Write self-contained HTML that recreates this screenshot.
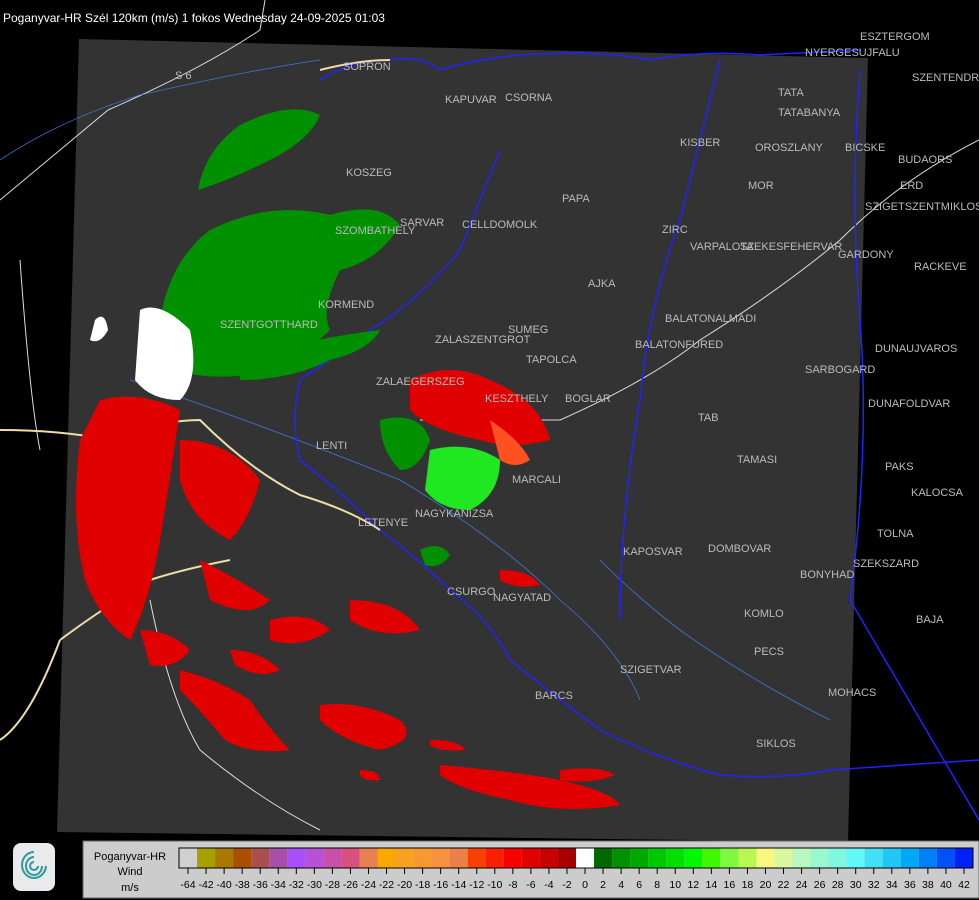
<!DOCTYPE html>
<html><head><meta charset="utf-8"><style>
html,body{margin:0;padding:0;background:#000;width:979px;height:900px;overflow:hidden;font-family:"Liberation Sans",sans-serif}
svg{position:absolute;left:0;top:0}
.t{font-family:"Liberation Sans",sans-serif;font-size:11px;fill:#bbb}
</style></head><body>
<svg width="979" height="900" viewBox="0 0 979 900">
<rect width="979" height="900" fill="#000"/>
<polygon points="79,39 868,58 848,842 57,832" fill="#333"/>
<g fill="none" stroke="#ddd" stroke-width="1">
<path d="M108,110 Q200,70 260,30 L265,0"/>
<path d="M0,200 Q60,150 108,110"/>
<path d="M420,420 Q520,420 560,420 Q650,380 700,340 Q780,290 840,240 Q900,180 979,140"/>
<path d="M150,600 Q170,700 200,750 Q260,800 320,830"/>
<path d="M20,260 Q30,400 40,450"/>
</g>
<g fill="none" stroke="#48f" stroke-width="0.8" opacity="0.8">
<path d="M0,160 Q60,120 140,95 Q250,70 320,60"/>
<path d="M130,380 Q250,420 400,480 Q500,540 560,600 Q620,650 640,700"/>
<path d="M600,560 Q640,600 680,630 Q750,680 830,720"/>
</g>
<g fill="none" stroke="#22f" stroke-width="1.5">
<path d="M320,80 Q350,60 390,60 Q420,55 440,70 Q470,60 520,55 Q600,50 650,60 Q700,50 760,55 L860,50"/>
<path d="M500,150 Q480,200 460,250 Q420,300 370,330 Q330,360 300,380 Q290,420 300,460 Q350,500 380,530 Q420,560 450,590 Q490,620 510,660 Q560,700 600,730 Q660,760 720,775 Q780,780 830,770 L979,760"/>
<path d="M720,60 Q700,140 680,220 Q650,300 640,400 Q620,520 620,620"/>
<path d="M860,70 Q850,200 860,320 Q870,450 850,600 L979,820"/>
</g>
<g fill="none" stroke="#eda" stroke-width="2">
<path d="M0,430 Q60,430 110,440 Q160,420 200,420 Q250,470 300,495 Q350,510 380,530"/>
<path d="M230,560 Q180,570 150,580 Q100,610 60,640"/>
<path d="M0,740 Q30,720 60,640"/>
<path d="M320,70 Q360,60 390,60"/>
</g>
<g fill="#009000">
<path d="M198,190 Q205,150 240,125 Q290,100 320,115 Q310,140 270,160 Q230,180 198,190Z"/>
<path d="M160,320 Q170,260 210,230 Q270,200 330,215 Q380,200 400,225 Q380,260 340,270 Q320,310 330,330 Q300,360 250,375 Q200,380 180,370 Z"/>
<path d="M240,360 Q300,340 380,330 Q370,350 330,360 Q290,380 240,380Z"/>
<path d="M380,420 Q420,410 430,440 Q420,470 400,470 Q380,450 380,420Z"/>
<path d="M420,550 Q440,540 450,555 Q440,570 425,565Z"/>
</g>
<path d="M430,450 Q470,440 500,460 Q500,495 470,510 Q440,510 425,490 Z" fill="#20e820"/>
<path d="M140,310 Q160,300 190,330 Q200,380 180,400 Q150,400 135,380 Z" fill="#fff"/>
<path d="M95,320 Q105,310 108,330 Q100,345 90,340Z" fill="#fff"/>
<g fill="#e00000">
<path d="M410,380 Q450,360 490,380 Q540,400 550,440 Q510,450 480,440 Q430,430 410,410Z"/>
<path d="M100,400 Q140,390 180,410 Q170,480 160,540 Q150,600 130,640 Q100,620 85,580 Q70,520 80,440Z"/>
<path d="M180,440 Q230,440 260,480 Q250,520 230,540 Q190,520 180,480Z"/>
<path d="M200,560 Q240,580 270,600 Q250,620 210,600Z"/>
<path d="M140,630 Q170,630 190,650 Q175,670 150,665Z"/>
<path d="M180,670 Q220,680 250,700 Q270,730 290,750 Q250,755 225,740 Q200,710 180,690Z"/>
<path d="M230,650 Q260,650 280,670 Q260,680 235,665Z"/>
<path d="M270,620 Q310,610 330,630 Q300,650 270,640Z"/>
<path d="M350,600 Q400,600 420,630 Q380,640 350,620Z"/>
<path d="M320,705 Q360,700 400,720 Q420,740 380,750 Q340,740 320,720Z"/>
<path d="M440,765 Q500,770 550,778 Q610,790 620,805 Q560,815 510,800 Q460,790 440,775Z"/>
<path d="M560,770 Q600,765 615,775 Q590,785 560,780Z"/>
<path d="M430,740 Q460,740 465,750 Q440,752 430,745Z"/>
<path d="M360,770 Q380,770 380,780 Q365,782 360,775Z"/>
<path d="M500,570 Q530,570 540,585 Q515,590 500,580Z"/>
</g>
<path d="M490,420 Q520,440 530,460 Q515,470 500,460Z" fill="#ff5020"/>
<g class="t">
<text x="343" y="70">SOPRON</text><text x="445" y="103">KAPUVAR</text><text x="505" y="101">CSORNA</text>
<text x="778" y="96">TATA</text><text x="778" y="116">TATABANYA</text><text x="680" y="146">KISBER</text>
<text x="755" y="151">OROSZLANY</text><text x="845" y="151">BICSKE</text><text x="898" y="163">BUDAORS</text>
<text x="748" y="189">MOR</text><text x="346" y="176">KOSZEG</text><text x="562" y="202">PAPA</text>
<text x="400" y="226">SARVAR</text><text x="462" y="228">CELLDOMOLK</text><text x="335" y="234">SZOMBATHELY</text>
<text x="662" y="233">ZIRC</text><text x="690" y="250">VARPALOTA</text><text x="740" y="250">SZEKESFEHERVAR</text>
<text x="838" y="258">GARDONY</text><text x="914" y="270">RACKEVE</text><text x="588" y="287">AJKA</text>
<text x="318" y="308">KORMEND</text><text x="220" y="328">SZENTGOTTHARD</text><text x="665" y="322">BALATONALMADI</text>
<text x="508" y="333">SUMEG</text><text x="435" y="343">ZALASZENTGROT</text><text x="635" y="348">BALATONFURED</text>
<text x="875" y="352">DUNAUJVAROS</text><text x="526" y="363">TAPOLCA</text><text x="805" y="373">SARBOGARD</text>
<text x="376" y="385">ZALAEGERSZEG</text><text x="485" y="402">KESZTHELY</text><text x="565" y="402">BOGLAR</text>
<text x="868" y="407">DUNAFOLDVAR</text><text x="698" y="421">TAB</text><text x="316" y="449">LENTI</text>
<text x="737" y="463">TAMASI</text><text x="885" y="470">PAKS</text><text x="512" y="483">MARCALI</text>
<text x="911" y="496">KALOCSA</text><text x="415" y="517">NAGYKANIZSA</text><text x="358" y="526">LETENYE</text>
<text x="877" y="537">TOLNA</text><text x="708" y="552">DOMBOVAR</text><text x="623" y="555">KAPOSVAR</text>
<text x="853" y="567">SZEKSZARD</text><text x="800" y="578">BONYHAD</text><text x="447" y="595">CSURGO</text>
<text x="493" y="601">NAGYATAD</text><text x="744" y="617">KOMLO</text><text x="916" y="623">BAJA</text>
<text x="754" y="655">PECS</text><text x="620" y="673">SZIGETVAR</text><text x="828" y="696">MOHACS</text>
<text x="535" y="699">BARCS</text><text x="756" y="747">SIKLOS</text><text x="175" y="79">S 6</text>
<text x="860" y="40">ESZTERGOM</text><text x="805" y="56">NYERGESUJFALU</text><text x="912" y="81">SZENTENDRE</text>
<text x="900" y="189">ERD</text><text x="865" y="210">SZIGETSZENTMIKLOS</text>
</g>
<text x="3" y="22" fill="#fff" font-size="12" font-family="Liberation Sans,sans-serif">Poganyvar-HR Szél 120km (m/s) 1 fokos Wednesday 24-09-2025 01:03</text>
<rect x="13" y="843" width="42" height="48" rx="8" fill="#e8eaec"/>
<g fill="none" stroke="#2a9a9a" stroke-width="2">
<path d="M34,852 a12,13 0 1 0 12,14"/><path d="M34,857 a8,9 0 1 0 8,9"/><path d="M34,862 a4,4 0 1 0 4,4"/>
</g>
<rect x="83" y="841" width="896" height="57" fill="#ccc" stroke="#666"/>
<text x="130" y="860" font-size="11" text-anchor="middle" fill="#000" font-family="Liberation Sans,sans-serif">Poganyvar-HR</text>
<text x="130" y="875" font-size="11" text-anchor="middle" fill="#000" font-family="Liberation Sans,sans-serif">Wind</text>
<text x="130" y="891" font-size="11" text-anchor="middle" fill="#000" font-family="Liberation Sans,sans-serif">m/s</text>
<g id="bar"></g>
</svg>
<script>
var c=["#d0d0d0","#a8a000","#a87800","#a85000","#a85050","#a850a8","#a850f8","#b850d8","#c850a8","#d85080","#e88050","#f8a800","#f8a020","#f89830","#f89040","#e88048","#f84000","#f82000","#f80000","#e00000","#c80000","#a80000","#ffffff","#006800","#009000","#00a800","#00c800","#00e000","#00f800","#40f800","#80f840","#b8f850","#f8f880","#d8f8a0","#b8f8c0","#98f8d0","#80f8e0","#60f8f8","#40e0f8","#20c8f8","#00a8f8","#0080f8","#0050f8","#0020f8"];
var labs=[-64];for(var v=-42;v<=-2;v+=2)labs.push(v);for(v=0;v<=42;v+=2)labs.push(v);
var g=document.getElementById("bar"),x0=179,w=794/44,s="";
for(var i=0;i<44;i++){s+='<rect x="'+(x0+i*w)+'" y="848" width="'+w+'" height="20" fill="'+c[i]+'"/>';}
s+='<rect x="179" y="848" width="794" height="20" fill="none" stroke="#000"/>';
for(i=0;i<44;i++){var xx=x0+(i+0.5)*w;s+='<line x1="'+xx+'" y1="868" x2="'+xx+'" y2="874" stroke="#000"/><text x="'+xx+'" y="888" font-size="10.5" text-anchor="middle" font-family="Liberation Sans,sans-serif" fill="#000">'+labs[i]+'</text>';}
g.innerHTML=s;
</script>
</body></html>
